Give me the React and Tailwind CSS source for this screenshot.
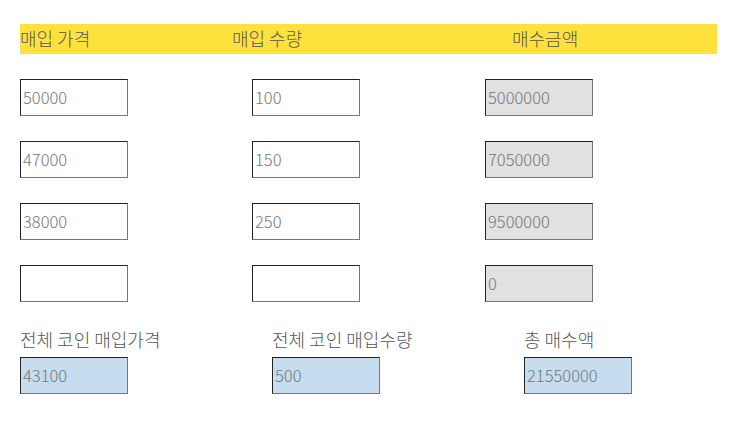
import React from 'react';

const ROWS = [
  { price: '50000', qty: '100', total: '5000000' },
  { price: '47000', qty: '150', total: '7050000' },
  { price: '38000', qty: '250', total: '9500000' },
  { price: '', qty: '', total: '0' },
];

const font = { fontFamily: '"Noto Sans CJK KR", "Noto Sans", sans-serif' };

function Box({ value, tone = 'white' }) {
  const bg = tone === 'gray' ? 'bg-[#e1e1e1]' : tone === 'blue' ? 'bg-[#c6ddf0]' : 'bg-white';
  return (
    <div
      className={`w-[108px] h-[37px] flex items-center px-[2px] text-[16.5px] font-light text-[#777] border border-t-[#222] border-l-[#222] border-r-[#767676] border-b-[#767676] ${bg}`}
    >
      {value}
    </div>
  );
}

export default function App() {
  return (
    <div className="w-[745px] h-[424px] bg-white px-[20px] pt-[24px]" style={font}>
      <div className="w-[697px] h-[30px] pb-[2px] bg-[#fee13c] flex items-center text-[18px] font-light text-[#555]">
        <span className="w-[212px] whitespace-nowrap">매입 가격</span>
        <span className="w-[280px] whitespace-nowrap">매입 수량</span>
        <span className="whitespace-nowrap">매수금액</span>
      </div>

      <div className="mt-[25px] flex flex-col gap-[25px]">
        {ROWS.map((r, i) => (
          <div key={i} className="grid grid-cols-[232px_233px_108px]">
            <Box value={r.price} />
            <Box value={r.qty} />
            <Box value={r.total} tone="gray" />
          </div>
        ))}
      </div>

      <div className="mt-[25px] grid grid-cols-[252px_252px_108px] text-[18px] font-light text-[#555]">
        <div>
          <div className="h-[24px] leading-[24px] mb-[6px] whitespace-nowrap">전체 코인 매입가격</div>
          <Box value="43100" tone="blue" />
        </div>
        <div>
          <div className="h-[24px] leading-[24px] mb-[6px] whitespace-nowrap">전체 코인 매입수량</div>
          <Box value="500" tone="blue" />
        </div>
        <div>
          <div className="h-[24px] leading-[24px] mb-[6px] whitespace-nowrap">총 매수액</div>
          <Box value="21550000" tone="blue" />
        </div>
      </div>
    </div>
  );
}
